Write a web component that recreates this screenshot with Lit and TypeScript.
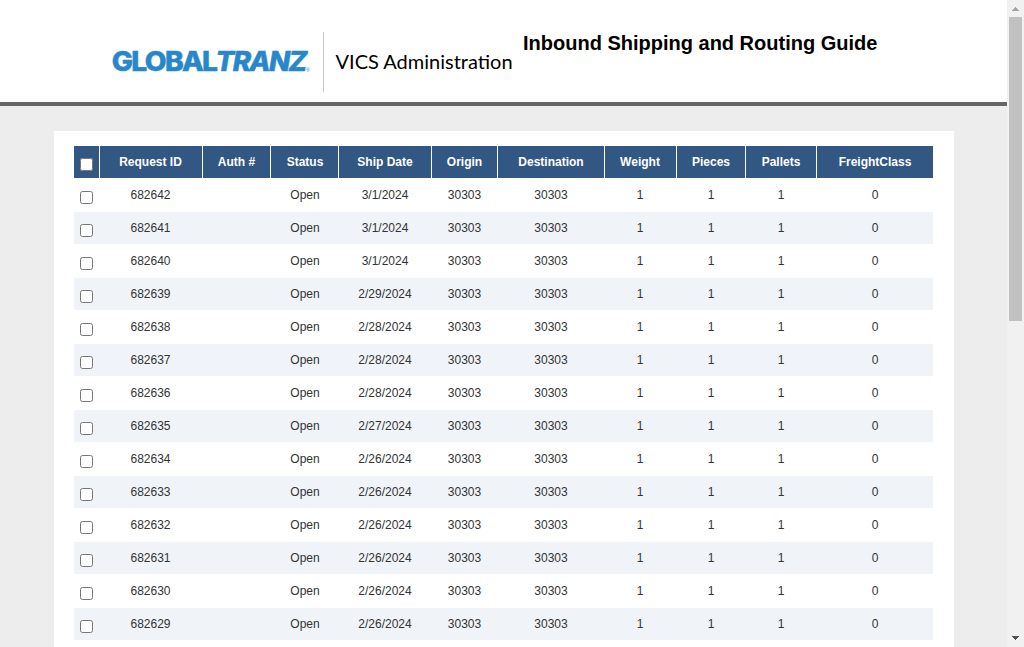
import { LitElement, html, css } from "lit";
import { customElement } from "lit/decorators.js";

interface Shipment {
  id: number;
  date: string;
}

const DATES = [
  "3/1/2024", "3/1/2024", "3/1/2024", "2/29/2024", "2/28/2024", "2/28/2024", "2/28/2024",
  "2/27/2024", "2/26/2024", "2/26/2024", "2/26/2024", "2/26/2024", "2/26/2024", "2/26/2024",
];
const SHIPMENTS: Shipment[] = DATES.map((date, i) => ({ id: 682642 - i, date }));

const HEADINGS = [
  "Request ID", "Auth #", "Status", "Ship Date", "Origin",
  "Destination", "Weight", "Pieces", "Pallets", "FreightClass",
];

@customElement("shipment-table")
export class ShipmentTable extends LitElement {
  static styles = css`
    :host {
      display: block;
      width: 859px;
      font: 12px/16px "Liberation Sans", Arial, sans-serif;
      color: #333;
    }
    .row {
      display: grid;
      grid-template-columns: 25px 102px 67px 67px 92px 65px 106px 71px 68px 70px 116px;
      column-gap: 1px;
      height: 32px;
      margin-bottom: 1px;
    }
    .row:nth-child(odd) {
      background: #f0f4f9;
    }
    .row.head {
      background: #fff;
      color: #fff;
      font-weight: bold;
    }
    .head .cell {
      background: #335783;
    }
    .cell {
      box-sizing: border-box;
      padding-top: 8px;
      text-align: center;
      white-space: nowrap;
    }
    .cell:nth-child(2),
    .cell:nth-child(8) {
      padding-right: 1px;
    }
    .cell:nth-child(4) {
      padding-left: 1px;
    }
    .row .check {
      padding: 12px 0 0 6px;
      text-align: left;
    }
    .box {
      display: block;
      width: 13px;
      height: 13px;
      margin: 0;
    }
  `;

  render() {
    return html`
      <div class="row head">
        <div class="cell check"><input class="box" type="checkbox" aria-label="Select all" /></div>
        ${HEADINGS.map((h) => html`<div class="cell">${h}</div>`)}
      </div>
      ${SHIPMENTS.map((s) => {
        const values = [s.id, "", "Open", s.date, "30303", "30303", "1", "1", "1", "0"];
        return html`<div class="row">
          <div class="cell check"><input class="box" type="checkbox" aria-label="Select" /></div>
          ${values.map((v) => html`<div class="cell">${v}</div>`)}
        </div>`;
      })}
    `;
  }
}

@customElement("app-root")
export class AppRoot extends LitElement {
  static styles = css`
    :host {
      display: flex;
      width: 1024px;
      height: 647px;
      overflow: hidden;
      background: #ededed;
      font-family: "Liberation Sans", Arial, sans-serif;
    }
    .page {
      flex: 1;
      min-width: 0;
    }
    .banner {
      box-sizing: border-box;
      display: flex;
      height: 106px;
      padding: 32px 0 0 112px;
      background: #fff;
      border-bottom: 4px solid #666;
    }
    .logo {
      width: 200px;
      height: 60px;
      flex: none;
    }
    .mark {
      font-family: Inter, sans-serif;
      font-weight: 800;
      font-size: 27px;
      letter-spacing: -1.6px;
      fill: #2887cb;
      stroke: #2887cb;
      stroke-width: 0.5px;
    }
    .slant {
      font-style: italic;
    }
    .reg {
      font: 5px "Liberation Sans", sans-serif;
      fill: #2887cb;
    }
    .app {
      box-sizing: border-box;
      width: 200px;
      height: 60px;
      margin-left: 11px;
      padding-left: 11.5px;
      border-left: 1px solid #ccc;
      font: 20px/58px Lato, sans-serif;
      color: #000;
      white-space: nowrap;
    }
    .title {
      margin: 0;
      font-size: 20px;
      line-height: 22px;
      font-weight: bold;
      white-space: nowrap;
      color: #000;
    }
    .card {
      width: 860px;
      height: 510px;
      margin: 25px 0 0 54px;
      padding: 15px 20px 0;
      background: #fff;
    }
    .scroll {
      box-sizing: border-box;
      display: flex;
      flex-direction: column;
      align-items: center;
      width: 17px;
      padding: 7px 0;
      background: #f1f1f1;
    }
    .arrow {
      display: block;
      width: 7px;
      height: 4px;
      flex: none;
    }
    .thumb {
      width: 13px;
      height: 304px;
      margin: 6px 0 auto;
      background: #c1c1c1;
    }
  `;

  render() {
    return html`
      <div class="page">
        <header class="banner">
          <svg class="logo" viewBox="0 0 200 60" role="img" aria-label="GlobalTranz">
            <text class="mark" x="-0.2" y="39.3" textLength="104.5" lengthAdjust="spacingAndGlyphs">GLOBAL</text>
            <text class="mark slant" x="103.6" y="39.3" textLength="90" lengthAdjust="spacingAndGlyphs">TRANZ</text>
            <text class="reg" x="194" y="39.5">®</text>
          </svg>
          <div class="app">VICS Administration</div>
          <h1 class="title">Inbound Shipping and Routing Guide</h1>
        </header>
        <main class="card"><shipment-table></shipment-table></main>
      </div>
      <div class="scroll">
        <svg class="arrow" viewBox="0 0 7 4" shape-rendering="crispEdges">
          <path fill="#a3a3a3" d="M3 0h1v1h1v1h1v1h1v1H0V3h1V2h1V1h1z" />
        </svg>
        <div class="thumb"></div>
        <svg class="arrow" viewBox="0 0 7 4" shape-rendering="crispEdges">
          <path fill="#505050" d="M0 0h7v1H6v1H5v1H4v1H3V3H2V2H1V1H0z" />
        </svg>
      </div>
    `;
  }
}
